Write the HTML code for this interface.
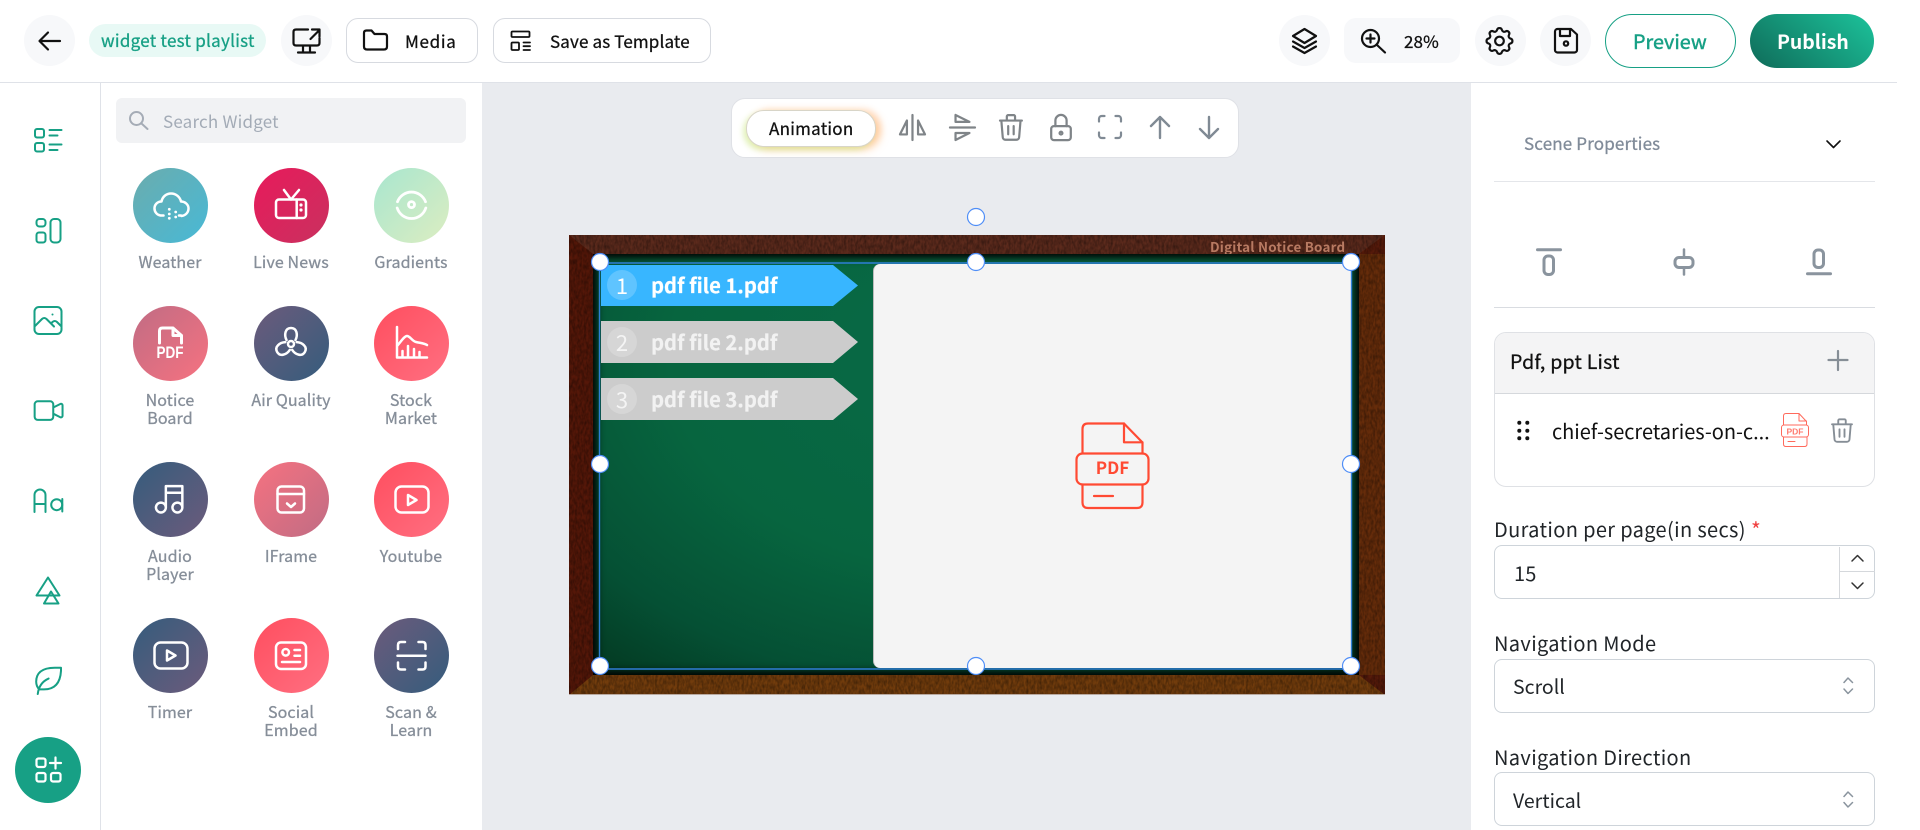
<!DOCTYPE html>
<html><head><meta charset="utf-8"><title>Editor</title>
<style>
html,body{margin:0;padding:0;width:1920px;height:830px;overflow:hidden;background:#fff}
body{position:relative;font-family:"Noto Sans CJK SC","Liberation Sans",sans-serif;color:#111}
.a{position:absolute;box-sizing:border-box}
.t{position:absolute;white-space:nowrap;height:24px;line-height:24px}
.c{position:absolute;width:120px;text-align:center;font-size:16px;line-height:18px;color:#868e99;letter-spacing:.12px;-webkit-text-stroke:.3px #868e99}
.s{-webkit-text-stroke:.3px currentColor}
.circ{position:absolute;width:75px;height:75px;border-radius:50%}
.rb{position:absolute;width:51px;height:51px;border-radius:50%;background:#f7f8fa;top:15px}
.in{position:absolute;box-sizing:border-box;left:1494px;width:381px;height:54px;border:1px solid #ced4da;border-radius:8px;background:#fff}
.lb{font-size:20px;color:#212529;letter-spacing:.35px}
.lt{font-size:20.2px;font-weight:700;color:#fff;-webkit-text-stroke:.2px currentColor}
.n{position:absolute;font-size:22px;color:#fff;width:30px;text-align:center;height:30px;line-height:30px}
svg{position:absolute;left:0;top:0}
</style></head><body>
<!-- chrome -->
<div class="a" style="left:0;top:82px;width:1897px;height:1px;background:#dfe2e8"></div>
<div class="a" style="left:100px;top:83px;width:1px;height:747px;background:#dfe2e8"></div>
<div class="a" style="left:482px;top:83px;width:989px;height:747px;background:#e9ebef"></div>

<!-- top bar -->
<div class="rb" style="left:24px"></div>
<div class="a" style="left:89px;top:24px;width:177px;height:33px;border-radius:17px;background:#e8f9f5"></div>
<div class="t s" style="left:101px;top:28px;font-size:17px;color:#17a085;letter-spacing:.27px">widget test playlist</div>
<div class="rb" style="left:281px"></div>
<div class="a" style="left:346px;top:18px;width:132px;height:45px;border:1px solid #d7dae0;border-radius:12px"></div>
<div class="t s" style="left:405px;top:29px;font-size:17px;letter-spacing:.7px">Media</div>
<div class="a" style="left:493px;top:18px;width:218px;height:45px;border:1px solid #d7dae0;border-radius:12px"></div>
<div class="t s" style="left:550px;top:29px;font-size:17px;letter-spacing:.15px">Save as Template</div>

<div class="rb" style="left:1279px"></div>
<div class="a" style="left:1344px;top:18px;width:116px;height:45px;background:#f7f8fa;border-radius:12px"></div>
<div class="t s" style="left:1404px;top:29px;font-size:17px;letter-spacing:.1px">28%</div>
<div class="rb" style="left:1475px"></div>
<div class="rb" style="left:1540px"></div>
<div class="a" style="left:1605px;top:14px;width:131px;height:54px;border:1px solid #17a085;border-radius:27px"></div>
<div class="t" style="left:1633px;top:29px;font-size:19.8px;color:#17a085;-webkit-text-stroke:.45px #17a085">Preview</div>
<div class="a" style="left:1750px;top:14px;width:124px;height:54px;border-radius:27px;background:linear-gradient(40deg,#0f6b59,#1cc39b)"></div>
<div class="t" style="left:1777px;top:29px;font-size:19.4px;font-weight:700;color:#fff">Publish</div>

<!-- rail -->
<div class="a" style="left:15px;top:737px;width:66px;height:66px;border-radius:50%;background:#17a085"></div>

<!-- widget panel -->
<div class="a" style="left:116px;top:98px;width:350px;height:45px;border-radius:6px;background:#f1f2f4"></div>
<div class="t" style="left:163px;top:109px;font-size:17px;color:#a3abb6;letter-spacing:.2px">Search Widget</div>

<div class="circ" style="left:133px;top:168px;background:linear-gradient(135deg,#6bacad,#48b9d6)"></div>
<div class="circ" style="left:254px;top:168px;background:linear-gradient(135deg,#e81a5b,#c9315f)"></div>
<div class="circ" style="left:374px;top:168px;background:linear-gradient(135deg,#a8e6cf,#dcedc1)"></div>
<div class="circ" style="left:133px;top:306px;background:linear-gradient(135deg,#c06c84,#f67280)"></div>
<div class="circ" style="left:254px;top:306px;background:linear-gradient(135deg,#6c5b7b,#355c7d)"></div>
<div class="circ" style="left:374px;top:306px;background:linear-gradient(135deg,#ff4e5f,#ff6f81)"></div>
<div class="circ" style="left:133px;top:462px;background:linear-gradient(135deg,#355c7d,#6c5b7b)"></div>
<div class="circ" style="left:254px;top:462px;background:linear-gradient(135deg,#f67280,#c06c84)"></div>
<div class="circ" style="left:374px;top:462px;background:linear-gradient(135deg,#ff4e5f,#ff6f81)"></div>
<div class="circ" style="left:133px;top:618px;background:linear-gradient(135deg,#355c7d,#6c5b7b)"></div>
<div class="circ" style="left:254px;top:618px;background:linear-gradient(135deg,#ff4e5f,#ff6f81)"></div>
<div class="circ" style="left:374px;top:618px;background:linear-gradient(135deg,#6c5b7b,#355c7d)"></div>

<div class="c" style="left:110px;top:252px">Weather</div>
<div class="c" style="left:231px;top:252px">Live News</div>
<div class="c" style="left:351px;top:252px">Gradients</div>
<div class="c" style="left:110px;top:390px">Notice<br>Board</div>
<div class="c" style="left:231px;top:390px">Air Quality</div>
<div class="c" style="left:351px;top:390px">Stock<br>Market</div>
<div class="c" style="left:110px;top:546px">Audio<br>Player</div>
<div class="c" style="left:231px;top:546px">IFrame</div>
<div class="c" style="left:351px;top:546px">Youtube</div>
<div class="c" style="left:110px;top:702px">Timer</div>
<div class="c" style="left:231px;top:702px">Social<br>Embed</div>
<div class="c" style="left:351px;top:702px">Scan &amp;<br>Learn</div>

<!-- toolbar -->
<div class="a" style="left:731px;top:98px;width:508px;height:60px;background:#fff;border:1px solid #dfe1e6;border-radius:14px"></div>
<div class="a" style="left:746px;top:110px;width:130px;height:37px;background:#fff;border:1px solid #d8d5c8;border-radius:18px;box-shadow:-3px 3px 6px rgba(190,230,110,.45),5px 3px 8px rgba(255,180,110,.5),5px -2px 6px rgba(255,190,140,.3)"></div>
<div class="t s" style="left:769px;top:116px;font-size:17px;letter-spacing:.25px">Animation</div>

<!-- wooden frame -->
<svg width="1920" height="830" viewBox="0 0 1920 830">
<defs>
<filter id="w" x="0" y="0" width="100%" height="100%"><feTurbulence type="fractalNoise" baseFrequency="0.45 0.2" numOctaves="2" seed="4"/><feColorMatrix values="0 0 0 0 0 0 0 0 0 0 0 0 0 0 0 0 0 0 .7 -.2"/></filter>
</defs>
<rect x="569" y="235" width="816" height="460" fill="#54200c"/>
<polygon points="569,235 1385,235 1359,254 593,254" fill="#5c2a1c"/>
<polygon points="569,235 593,254 593,675 569,695" fill="#551708"/>
<polygon points="1385,235 1359,254 1359,675 1385,695" fill="#662c0a"/>
<polygon points="569,695 593,675 1359,675 1385,695" fill="#723c0c"/>
<polygon points="1385,235 1359,254 1385,254" fill="#561a0a"/>
<polygon points="1385,695 1359,675 1385,675" fill="#561a0a"/>
<rect x="569" y="235" width="816" height="460" filter="url(#w)"/>
<rect x="569" y="694" width="816" height="1" fill="#b9a9a0"/>
</svg>
<div class="t" style="left:1210px;top:234px;font-size:13.4px;font-weight:700;color:#b87a62;letter-spacing:.22px">Digital Notice Board</div>
<div class="a" style="left:593px;top:254px;width:766px;height:421px;background:radial-gradient(ellipse 80% 100% at 50% 25%,#086a47 0%,#07653f 50%,#055034 78%,#03351e 100%);box-shadow:inset 0 0 8px 4px #000"></div>
<div class="a" style="left:873px;top:264px;width:478px;height:404px;background:#f4f4f4;border-radius:7px 0 0 7px;border-left:1px solid #bbb"></div>

<!-- all icons, handles, list shapes -->
<svg width="1920" height="830" viewBox="0 0 1920 830" fill="none" stroke-linecap="round" stroke-linejoin="round">
<!-- list -->
<polygon points="601,265 833,265 858,285.5 833,306 601,306" fill="#38b6ff"/>
<polygon points="601,321 833,321 858,342 833,363 601,363" fill="#cccccc"/>
<polygon points="601,378 833,378 858,399 833,420 601,420" fill="#cccccc"/>
<circle cx="622" cy="285" r="15" fill="#fff" fill-opacity=".2"/>
<circle cx="622" cy="342" r="15" fill="#fff" fill-opacity=".2"/>
<circle cx="622" cy="399" r="15" fill="#fff" fill-opacity=".2"/>
<!-- selection -->
<rect x="599.5" y="263" width="752" height="406" stroke="#2f7fd6" stroke-width="1.4"/>
<g fill="#fff" stroke="#4f8ef7" stroke-width="1.2">
<circle cx="976" cy="217" r="8.5"/>
<circle cx="600" cy="262" r="8.5"/><circle cx="976" cy="262" r="8.5"/><circle cx="1351" cy="262" r="8.5"/>
<circle cx="600" cy="464" r="8.5"/><circle cx="1351" cy="464" r="8.5"/>
<circle cx="600" cy="666" r="8.5"/><circle cx="976" cy="666" r="8.5"/><circle cx="1351" cy="666" r="8.5"/>
</g>
<!-- big PDF -->
<g stroke="#ff4a33" stroke-width="2.2">
<path d="M1082.5 453v-24q0-5.500 5.500-5.500h36l18.500 19v11"/><path d="M1124 423.500v18.800h18.500"/>
<rect x="1076.500" y="453.500" width="72" height="31" rx="6"/>
<path d="M1082.500 484.500v18q0 5.500 5.500 5.500h49q5.500 0 5.500-5.500v-18"/><path d="M1094 496h19"/>
</g>
<text x="1112.500" y="474" font-family="Noto Sans CJK SC,Liberation Sans,sans-serif" font-weight="700" font-size="17" fill="#ff4a33" text-anchor="middle" stroke="none">PDF</text>

<!-- top icons -->
<g stroke="#111" stroke-width="2.2">
<path d="M60 41H40M48 32.500L39.500 41L48 49.500"/>
<path d="M308 29.500H296q-2.500 0-2.500 2.500v11q0 2.500 2.500 2.500h21q2.500 0 2.500-2.500v-5M310.500 39L319 30.500M312 29.500h7.500v7M303 46v6M310 46v6M298 52.500h17"/>
<path d="M364 33q0-2.500 2.500-2.500h5l3 3.500h10q2.500 0 2.500 2.500v10q0 3-3 3h-17q-3 0-3-3z"/>
<g stroke-width="1.800"><rect x="511.500" y="31.500" width="18" height="5.500" rx="1"/><rect x="511.500" y="42.500" width="7.500" height="7.500" rx="1"/><path d="M523.500 42.500h6.500M523.500 46.200h6.500M523.500 50h6.500"/></g>
<path d="M1304.500 29L1316 36l-11.500 7L1293 36zM1293 41.500l11.500 6.500 11.500-6.500M1293 46.500l11.500 6.500 11.500-6.500"/>
<circle cx="1370.500" cy="38.500" r="8.500"/><path d="M1366.500 38.500h8M1370.500 34.500v8M1377 45l8 7.500"/>
<g transform="translate(1482.200 23.700) scale(1.44)" stroke-width="1.5"><path d="M10.325 4.317c.426-1.756 2.924-1.756 3.350 0a1.724 1.724 0 0 0 2.573 1.066c1.543-.94 3.310.826 2.370 2.370a1.724 1.724 0 0 0 1.065 2.572c1.756.426 1.756 2.924 0 3.350a1.724 1.724 0 0 0-1.066 2.573c.94 1.543-.826 3.310-2.370 2.370a1.724 1.724 0 0 0-2.572 1.065c-.426 1.756-2.924 1.756-3.350 0a1.724 1.724 0 0 0-2.573-1.066c-1.543.94-3.310-.826-2.370-2.370a1.724 1.724 0 0 0-1.065-2.572c-1.756-.426-1.756-2.924 0-3.350a1.724 1.724 0 0 0 1.066-2.573c-.94-1.543.826-3.310 2.370-2.370c1 .608 2.296.07 2.572-1.065z"/><circle cx="12" cy="12" r="3"/></g>
<path d="M1557.500 29h13.500l6 5.500v15.500a2.500 2.500 0 0 1-2.500 2.500h-17a2.500 2.500 0 0 1-2.500-2.500v-18.500a2.500 2.500 0 0 1 2.500-2.500zM1560 29v7h10v-7"/><circle cx="1566" cy="43.500" r="2.200"/>
</g>

<!-- rail icons -->
<g stroke="#17a085" stroke-width="2">
<rect x="35" y="129" width="9" height="8.500" rx="2"/><rect x="35" y="143" width="9" height="8.500" rx="2"/><path d="M49.500 130h12M49.500 135.500h8M49.500 144.500h12M49.500 150h8"/>
<rect x="36.500" y="219" width="9" height="7.500" rx="3"/><rect x="36.500" y="232.500" width="9" height="10" rx="2.500"/><rect x="50.500" y="219" width="10" height="23.500" rx="3.500"/>
<g transform="translate(30 302.500) scale(1.5)" stroke-width="1.35"><path d="M15 8h.01M3 6a3 3 0 0 1 3-3h12a3 3 0 0 1 3 3v12a3 3 0 0 1-3 3H6a3 3 0 0 1-3-3zM3 16l5-5c.928-.893 2.072-.893 3 0l5 5M14 14l1-1c.928-.893 2.072-.893 3 0l3 3"/></g>
<g transform="translate(30 392) scale(1.55)" stroke-width="1.3"><path d="M15 10l4.553-2.276A1 1 0 0 1 21 8.618v6.764a1 1 0 0 1-1.447.894L15 14zM3 8a2 2 0 0 1 2-2h8a2 2 0 0 1 2 2v8a2 2 0 0 1-2 2H5a2 2 0 0 1-2-2z"/></g>
<path d="M34.500 512v-17a5.500 5.500 0 0 1 11 0v17M34.500 504h11"/><circle cx="56.700" cy="504.700" r="5.500"/><path d="M62.300 499v12.500"/>
<path d="M48 577.500L36.500 595.500H59.500Z"/><path d="M51 591.500L44 603.500H58.500Z"/>
<g transform="translate(30 661.500) scale(1.55)" stroke-width="1.3"><path d="M5 21c.5-4.500 2.500-8 7-10M9 18c6.218 0 10.500-3.288 11-12V4h-4.014c-9 0-11.986 4-12 9 0 1 0 3 2 5z"/></g>
</g>
<g stroke="#fff" stroke-width="2.2">
<rect x="36.500" y="758.500" width="9" height="8.500" rx="2"/><rect x="36.500" y="773" width="9" height="8.500" rx="2"/><rect x="51" y="773" width="9.500" height="8.500" rx="2"/><path d="M50 763h11M55.500 757.500v11"/>
</g>

<!-- search -->
<g stroke="#a5acb6" stroke-width="2"><circle cx="136.500" cy="118.500" r="6.500"/><path d="M141.500 123.500l6 5.500"/></g>

<!-- widget icons -->
<g stroke="#fff" stroke-width="2.5">
<path d="M160.500 215.500c-3.500-.5-6-3.500-6-7 0-4 3-7 7-7 1-5 5-8 9.500-8 5 0 9 3.500 10 8 4 0 7.500 3 7.500 7s-3 7-7 7.500M160.500 215.500h3M181 215.500h-2"/>
<g fill="#fff" stroke="none"><circle cx="169.300" cy="209.300" r="1.400"/><circle cx="169.300" cy="214" r="1.400"/><circle cx="169.300" cy="218.300" r="1.400"/><circle cx="175.700" cy="212" r="1.400"/><circle cx="175.700" cy="217" r="1.400"/></g>
<rect x="276" y="199.500" width="30" height="18.500" rx="3"/><path d="M284 190l7 9.500 8-9.500M296.700 199.500v18.500"/>
<g fill="#fff" stroke="none"><circle cx="301" cy="205" r="1.600"/><circle cx="301" cy="210" r="1.600"/></g>
<path d="M397.500 201.700A15 15 0 0 1 425.500 201.700M397.200 208A15 15 0 0 0 425.800 208" stroke-width="2.800"/><circle cx="411.500" cy="204.600" r="3" stroke-width="2.800"/>
<path d="M159.500 343v-12q0-3 3-3h10.500l8.500 7.500v7.500M173 328v7.500h8.500" stroke-width="3"/>
<text x="170" y="358" font-family="Liberation Sans" font-weight="700" font-size="17" fill="#fff" stroke="none" text-anchor="middle" textLength="27" lengthAdjust="spacingAndGlyphs">PDF</text>
<circle cx="291" cy="344" r="3"/>
<path d="M286.500 340c-2.500-5-1.500-12 4.500-12s7 7 4.500 12"/><path d="M286.500 340c-2.500-5-1.500-12 4.500-12s7 7 4.500 12" transform="rotate(120 291 344)"/><path d="M286.500 340c-2.500-5-1.500-12 4.500-12s7 7 4.500 12" transform="rotate(240 291 344)"/>
<path d="M397 327v30.500h30M397 346c3-3 7-10 10-10s5 5 9 6 8 1 11 3M402.500 351v6M408 346v11M414 349v8M419.500 352v5"/>
<g transform="translate(151 479.500) scale(1.65)" stroke-width="1.5"><path d="M3 17a3 3 0 1 0 6 0 3 3 0 1 0-6 0M13 17a3 3 0 1 0 6 0 3 3 0 1 0-6 0M9 17V4h10v13M9 8h10"/></g>
<rect x="277.500" y="486.500" width="26.500" height="26" rx="4"/><path d="M277.500 494h26.500M287 503.500l4 3.500 4-3.500"/>
<rect x="395.500" y="486.500" width="33" height="26" rx="6"/><path d="M408 495v10l8.500-5z"/>
<rect x="154.500" y="642.500" width="33" height="26" rx="6"/><path d="M167 650.500v10l8.500-5z"/>
<rect x="276" y="642.500" width="30" height="26.500" rx="5"/><circle cx="285.700" cy="652.300" r="3.300"/><path d="M294.500 650h5.500M294.500 655.700h5.500M282 662h18"/>
<path d="M398 649v-4q0-3 3-3h4M425.500 649v-4q0-3-3-3h-4M398 662.500v4q0 3 3 3h4M425.500 662.500v4q0 3-3 3h-4M397.500 655.700h28"/>
</g>

<!-- toolbar icons -->
<g stroke="#7f8488" stroke-width="1.600">
<g transform="translate(895.800 110.800) scale(1.39)"><path d="M12 3v18M16 7v10h5zM8 7v10H3z"/></g>
<g transform="translate(945.800 110.800) scale(1.39)"><path d="M3 12h18M7 16h10L7 21zM7 8h10L7 3z"/></g>
<g transform="translate(994.500 111) scale(1.37)"><path d="M4 7h16M10 11v6M14 11v6M5 7l1 12a2 2 0 0 0 2 2h8a2 2 0 0 0 2-2l1-12M9 7V4a1 1 0 0 1 1-1h4a1 1 0 0 1 1 1v3"/></g>
<g transform="translate(1044.200 110.700) scale(1.4)"><rect x="5" y="11" width="14" height="10" rx="2"/><circle cx="12" cy="16" r="1"/><path d="M8 11V7a4 4 0 0 1 8 0v4"/></g>
</g>
<g stroke="#808a94" stroke-width="1.600">
<g transform="translate(1093.500 110.500) scale(1.375)"><path d="M4 8V6a2 2 0 0 1 2-2h2M4 16v2a2 2 0 0 0 2 2h2M16 4h2a2 2 0 0 1 2 2v2M16 20h2a2 2 0 0 0 2-2v-2"/></g>
<g transform="translate(1142 109.500) scale(1.5)"><path d="M12 5v14M18 11l-6-6M6 11l6-6"/></g>
<g transform="translate(1191 109.500) scale(1.5)"><path d="M12 5v14M18 13l-6 6M6 13l6 6"/></g>
</g>

<!-- right panel icons -->
<path d="M1827 141l6.500 6.500 6.500-6.500" stroke="#111" stroke-width="1.600"/>
<g stroke="#8a949e" stroke-width="3">
<path d="M1537.500 249.700h23"/><rect x="1544" y="256" width="9.500" height="18.500" rx="4"/>
<path d="M1684 249.500v25" stroke-width="2.500"/><rect x="1675" y="257.500" width="18" height="10" rx="4" fill="#fff"/>
<path d="M1807.500 273.700h23"/><rect x="1814" y="250" width="9.500" height="17.500" rx="4"/>
</g>
</svg>

<!-- list text -->
<div class="n" style="left:607px;top:270px">1</div>
<div class="n" style="left:607px;top:327px;color:#f4f4f4">2</div>
<div class="n" style="left:607px;top:384px;color:#f4f4f4">3</div>
<div class="t lt" style="left:651px;top:273px">pdf file 1.pdf</div>
<div class="t lt" style="left:651px;top:330px;color:#f2f2f2">pdf file 2.pdf</div>
<div class="t lt" style="left:651px;top:387px;color:#f2f2f2">pdf file 3.pdf</div>

<!-- right panel -->
<div class="t s" style="left:1524px;top:131px;font-size:17px;color:#808b99;letter-spacing:.15px">Scene Properties</div>
<div class="a" style="left:1494px;top:181px;width:381px;height:1px;background:#e4e6ea"></div>
<div class="a" style="left:1494px;top:307px;width:381px;height:1px;background:#d9dce1"></div>
<div class="a" style="left:1494px;top:332px;width:381px;height:155px;border:1px solid #dfe1e5;border-radius:12px;overflow:hidden"><div class="a" style="left:0;top:0;width:379px;height:61px;background:#f4f4f5;border-bottom:1px solid #d5d8dc"></div></div>
<div class="t s" style="left:1510px;top:349px;font-size:19.5px;letter-spacing:.25px">Pdf, ppt List</div>
<div class="t" style="left:1552px;top:419px;font-size:20px;color:#111;letter-spacing:-.03px">chief-secretaries-on-c...</div>
<div class="t lb" style="left:1494px;top:517px">Duration per page(in secs)</div>
<div class="t" style="left:1751px;top:518px;font-size:21px;color:#f03e3e">*</div>
<div class="in" style="top:545px"><div class="a" style="left:344px;top:1px;width:1px;height:51px;background:#d5d8dc"></div><div class="a" style="left:345px;top:25px;width:35px;height:1px;background:#d5d8dc"></div></div>
<div class="t" style="left:1514px;top:561px;font-size:20px;color:#212529;letter-spacing:.2px">15</div>
<div class="t lb" style="left:1494px;top:631px">Navigation Mode</div>
<div class="in" style="top:659px"></div>
<div class="t" style="left:1513px;top:674px;font-size:19.5px;color:#212529">Scroll</div>
<div class="t lb" style="left:1494px;top:745px">Navigation Direction</div>
<div class="in" style="top:772px"></div>
<div class="t" style="left:1513px;top:788px;font-size:19.5px;color:#212529">Vertical</div>

<!-- icons that sit above the panel cards and inputs -->
<svg width="1920" height="830" viewBox="0 0 1920 830" fill="none" stroke-linecap="round" stroke-linejoin="round">
<path d="M1838 351v19M1828.500 360h19" stroke="#868e96" stroke-width="2.200"/>
<g fill="#111" stroke="none"><circle cx="1519.300" cy="422.700" r="2"/><circle cx="1527.300" cy="422.700" r="2"/><circle cx="1519.300" cy="430.700" r="2"/><circle cx="1527.300" cy="430.700" r="2"/><circle cx="1519.300" cy="438.300" r="2"/><circle cx="1527.300" cy="438.300" r="2"/></g>
<g stroke="#ff6a5c" stroke-width="1"><path d="M1783.500 425v-9q0-2.500 2.500-2.500h13l7.500 8v3.500M1799 413.500v7.500h7.500"/><rect x="1781.500" y="425" width="27" height="12" rx="2.500"/><path d="M1783.500 437v7q0 2.500 2.500 2.500h18.500q2.500 0 2.500-2.500v-7M1788 441.500h7"/></g>
<text x="1795" y="434.500" font-family="Liberation Sans" font-weight="700" font-size="8.500" fill="#ff7a6e" text-anchor="middle" stroke="none">PDF</text>
<g transform="translate(1827 415.500) scale(1.25)" stroke="#868e96" stroke-width="1.500"><path d="M4 7h16M10 11v6M14 11v6M5 7l1 12a2 2 0 0 0 2 2h8a2 2 0 0 0 2-2l1-12M9 7V4a1 1 0 0 1 1-1h4a1 1 0 0 1 1 1v3"/></g>
<path d="M1852 561l5.500-5.500 5.500 5.500M1852 583l5.500 5.500 5.500-5.500" stroke="#333" stroke-width="1.500"/>
<path d="M1844 682.500l4-4.500 4.500 4.500M1844 689l4 4.500 4.500-4.500M1844 796.500l4-4.500 4.500 4.500M1844 802.500l4 4.500 4.500-4.500" stroke="#8a949e" stroke-width="1.500"/>
</svg>
</body></html>
